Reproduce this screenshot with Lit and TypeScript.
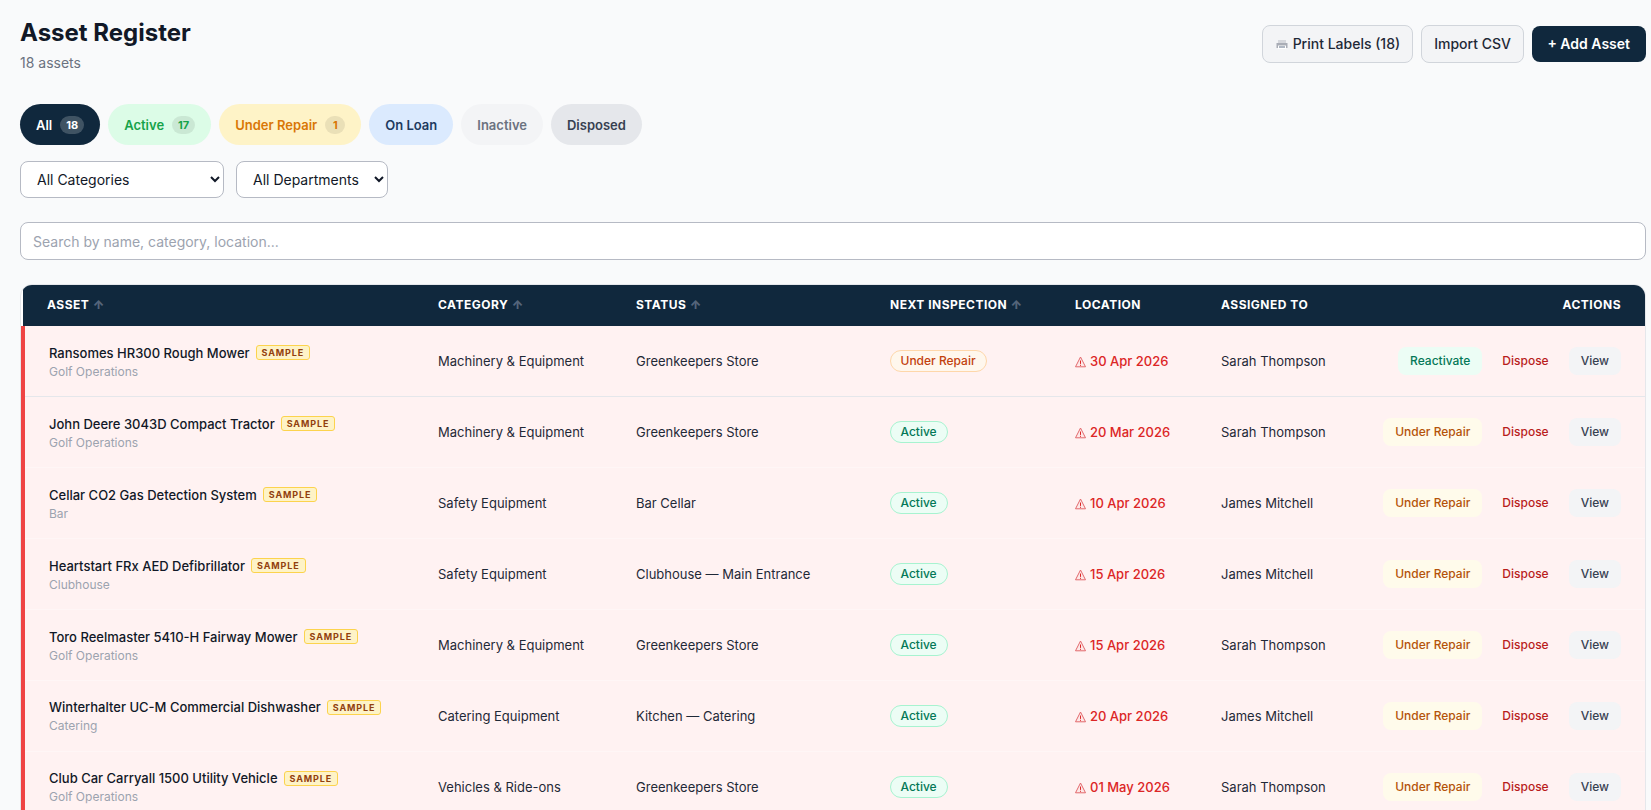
import { LitElement, html, css } from "lit";
import { customElement } from "lit/decorators.js";

interface Row { name: string; sub: string; cat: string; loc: string; status: string; date: string; who: string; }

const ROWS: Row[] = [
  { name: "Ransomes HR300 Rough Mower", sub: "Golf Operations", cat: "Machinery & Equipment", loc: "Greenkeepers Store", status: "Under Repair", date: "30 Apr 2026", who: "Sarah Thompson" },
  { name: "John Deere 3043D Compact Tractor", sub: "Golf Operations", cat: "Machinery & Equipment", loc: "Greenkeepers Store", status: "Active", date: "20 Mar 2026", who: "Sarah Thompson" },
  { name: "Cellar CO2 Gas Detection System", sub: "Bar", cat: "Safety Equipment", loc: "Bar Cellar", status: "Active", date: "10 Apr 2026", who: "James Mitchell" },
  { name: "Heartstart FRx AED Defibrillator", sub: "Clubhouse", cat: "Safety Equipment", loc: "Clubhouse — Main Entrance", status: "Active", date: "15 Apr 2026", who: "James Mitchell" },
  { name: "Toro Reelmaster 5410-H Fairway Mower", sub: "Golf Operations", cat: "Machinery & Equipment", loc: "Greenkeepers Store", status: "Active", date: "15 Apr 2026", who: "Sarah Thompson" },
  { name: "Winterhalter UC-M Commercial Dishwasher", sub: "Catering", cat: "Catering Equipment", loc: "Kitchen — Catering", status: "Active", date: "20 Apr 2026", who: "James Mitchell" },
  { name: "Club Car Carryall 1500 Utility Vehicle", sub: "Golf Operations", cat: "Vehicles & Ride-ons", loc: "Greenkeepers Store", status: "Active", date: "01 May 2026", who: "Sarah Thompson" },
];

const PILLS = [
  { label: "All", count: "18", cls: "all" },
  { label: "Active", count: "17", cls: "active" },
  { label: "Under Repair", count: "1", cls: "repair" },
  { label: "On Loan", count: "", cls: "loan" },
  { label: "Inactive", count: "", cls: "inactive" },
  { label: "Disposed", count: "", cls: "disposed" },
];

const HEADS = [
  { label: "Asset", sort: true }, { label: "Category", sort: true }, { label: "Status", sort: true },
  { label: "Next Inspection", sort: true }, { label: "Location", sort: false }, { label: "Assigned To", sort: false },
];

@customElement("app-root")
export class AppRoot extends LitElement {
  static styles = css`
    :host { display: block; height: 100vh; overflow: hidden; background: #f9fafb; font-family: Inter, "Liberation Sans", sans-serif; color: #111827; }
    * { box-sizing: border-box; }
    .page { padding: 17px 5px 0 20px; }
    .top { display: flex; justify-content: space-between; align-items: flex-start; margin-bottom: 31px; }
    h1 { margin: 0; font-size: 24px; line-height: 32px; font-weight: 700; color: #111827; }
    .count { margin-top: 4px; font-size: 14px; line-height: 20px; color: #6b7280; }
    .btns { display: flex; align-items: center; gap: 8px; margin-top: 8px; }
    .btn { font: 500 14px/20px Inter, sans-serif; height: 38px; padding: 0 12px; border-radius: 8px; border: 1px solid #d1d5db; background: #f3f4f6; color: #1f2937; display: flex; align-items: center; gap: 4px; }
    .btn.primary { height: 36px; border: 0; background: #10283d; color: #fff; font-weight: 600; padding: 0 16px 0 15.5px; }
    .btn svg { width: 14px; height: 14px; }
    .pills { display: flex; gap: 8px; margin-bottom: 16px; }
    .pill { height: 41px; border-radius: 20.5px; padding: 0 16px; display: flex; align-items: center; gap: 8px; font-size: 13px; font-weight: 600; }
    .pill b { min-width: 20px; height: 18px; padding: 0 6px; border-radius: 9px; font-size: 11px; font-weight: 700; line-height: 18px; text-align: center; background: rgba(0,0,0,.08); }
    .pill.all { background: #10283d; color: #fff; }
    .pill.all b { background: rgba(255,255,255,.2); }
    .pill.active { background: #dcfce7; color: #16a34a; }
    .pill.repair { background: #fef3c7; color: #d97706; }
    .pill.loan { background: #dbeafe; color: #1e3a5f; }
    .pill.inactive { background: #f3f4f6; color: #6b7280; }
    .pill.disposed { background: #e5e7eb; color: #374151; }
    .filters { display: flex; gap: 12px; margin-bottom: 24px; }
    select { height: 37px; border: 1px solid #b6bac4; border-radius: 8px; background: #fff; color: #111827; font: 400 14px Inter, sans-serif; padding: 0 12px; }
    .s1 { width: 204px; }
    .s2 { width: 152px; }
    input { display: block; width: 100%; height: 38px; border: 1px solid #b6bac4; border-radius: 8px; background: #fff; font: 400 14px Inter, sans-serif; padding: 0 12px; margin-bottom: 24px; }
    input::placeholder { color: #9ca3af; }
    .wrap { border: 1px solid #e5e7eb; border-radius: 12px; overflow: hidden; background: #fff; }
    table { width: 100%; border-collapse: collapse; table-layout: fixed; }
    .c1 { width: 391px; } .c2 { width: 198px; } .c3 { width: 254px; } .c4 { width: 185px; } .c5 { width: 146px; } .c6 { width: 162px; }
    th { background: #10283d; color: #fff; height: 41px; padding: 0 24px 2px; font-size: 12px; font-weight: 700; text-transform: uppercase; letter-spacing: .5px; text-align: left; white-space: nowrap; }
    th.r { text-align: right; }
    th span { color: #55657a; font-size: 12px; font-weight: 900; letter-spacing: 0; }
    td { height: 70.92px; padding: 0 24px; font-size: 13px; background: #fff2f2; color: #1f2937; border-bottom: 1px solid #fff6f6; white-space: nowrap; }
    tr:first-child td { border-bottom-color: #e5e7eb; }
    td:first-child { border-left: 4px solid #ef4444; padding-top: 1px; }
    .name { display: flex; align-items: center; gap: 6px; font-weight: 500; color: #111827; line-height: 18px; }
    .tag { font-size: 9px; font-weight: 700; letter-spacing: .9px; line-height: 13px; padding: 0 5px; color: #92400e; background: #fef3c7; border: 1px solid #fcd34d; border-radius: 3px; }
    .sub { margin-top: 2px; font-size: 12px; line-height: 16px; color: #9ca3af; }
    .badge { display: inline-block; margin-left: -.5px; font-size: 12px; font-weight: 500; line-height: 20px; padding: 0 10px; border-radius: 11px; border: 1px solid; }
    .badge.active { color: #047857; background: #ecfdf5; border-color: #a7f3d0; }
    .badge.repair { color: #c2410c; background: #fff7ed; border-color: #fed7aa; }
    .date { color: #dc2626; font-weight: 500; }
    .warn { width: 11px; height: 12px; margin-right: 4px; vertical-align: -2px; }
    .acts { display: flex; justify-content: flex-end; gap: 8px; }
    .act { font-size: 12px; font-weight: 500; line-height: 16px; padding: 6px 12px; border-radius: 8px; height: 28px; }
    .act.re { color: #047857; background: #ecfdf5; }
    .act.ur { color: #b45309; background: #fffbeb; }
    .act.di { color: #b91c1c; }
    .act.vi { color: #374151; background: #f3f4f6; }
  `;

  render() {
    return html`<div class="page">
      <div class="top">
        <div><h1>Asset Register</h1><div class="count">18 assets</div></div>
        <div class="btns">
          <div class="btn"><svg viewBox="0 0 14 14"><path fill="#d5d7dc" d="M3 3h8v3H3z"/><path fill="#a9adb6" d="M1.5 6h11v5h-11z"/><path fill="#fff" d="M3 8.5h8V12H3z"/><path fill="#5f6f86" d="M4 9.5h6v1H4z"/></svg>Print Labels (18)</div>
          <div class="btn">Import CSV</div>
          <div class="btn primary">+ Add Asset</div>
        </div>
      </div>
      <div class="pills">
        ${PILLS.map((p) => html`<div class="pill ${p.cls}">${p.label}${p.count ? html`<b>${p.count}</b>` : ""}</div>`)}
      </div>
      <div class="filters">
        <select class="s1"><option>All Categories</option></select>
        <select class="s2"><option>All Departments</option></select>
      </div>
      <input placeholder="Search by name, category, location..." />
      <div class="wrap">
        <table>
          <colgroup><col class="c1" /><col class="c2" /><col class="c3" /><col class="c4" /><col class="c5" /><col class="c6" /><col /></colgroup>
          <thead><tr>
            ${HEADS.map((h) => html`<th>${h.label}${h.sort ? html` <span>↑</span>` : ""}</th>`)}
            <th class="r">Actions</th>
          </tr></thead>
          <tbody>
            ${ROWS.map((r) => html`<tr>
              <td>
                <div class="name">${r.name}<span class="tag">SAMPLE</span></div>
                <div class="sub">${r.sub}</div>
              </td>
              <td>${r.cat}</td>
              <td>${r.loc}</td>
              <td><span class="badge ${r.status === "Active" ? "active" : "repair"}">${r.status}</span></td>
              <td class="date"><svg class="warn" viewBox="0 0 11 12"><path fill="#fde8e8" stroke="#e2686c" stroke-width="1" d="M5.5 1 10.5 10.8H.5z"/><path stroke="#dc2626" stroke-width="1" d="M5.5 4.5v3.4M5.5 8.8v1"/></svg>${r.date}</td>
              <td>${r.who}</td>
              <td><div class="acts">
                ${r.status === "Active" ? html`<div class="act ur">Under Repair</div>` : html`<div class="act re">Reactivate</div>`}
                <div class="act di">Dispose</div>
                <div class="act vi">View</div>
              </div></td>
            </tr>`)}
          </tbody>
        </table>
      </div>
    </div>`;
  }
}
